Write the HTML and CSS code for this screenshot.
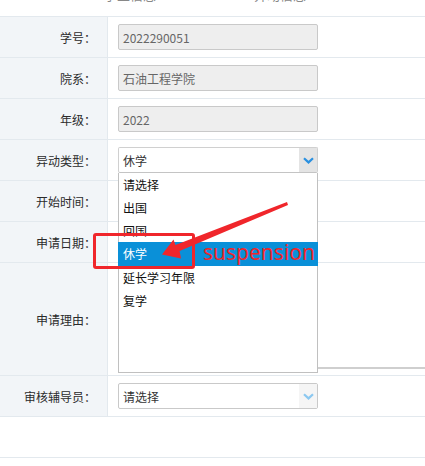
FILE: index.html
```html
<!DOCTYPE html>
<html lang="zh-CN">
<head>
<meta charset="utf-8">
<title>学籍异动申请</title>
<link rel="stylesheet" href="styles.css">
</head>
<body>
<div class="page">
  <div class="head"><span class="tab tab-a">学生信息</span><span class="tab tab-b">异动信息</span></div>
  <div class="form">
    <div class="row"><div class="lbl">学号：</div><div class="val"><div class="field ro">2022290051</div></div></div>
    <div class="row"><div class="lbl">院系：</div><div class="val"><div class="field ro">石油工程学院</div></div></div>
    <div class="row"><div class="lbl">年级：</div><div class="val"><div class="field ro">2022</div></div></div>
    <div class="row top"><div class="lbl">异动类型：</div><div class="val">
      <div class="field select focus"><span class="sel-text">休学</span><span class="arrow"><svg width="11" height="7" viewBox="0 0 11 7"><path d="M1 1.2 L5.5 5.4 L10 1.2" fill="none" stroke="#2a90e0" stroke-width="2.2"/></svg></span>
        <ul class="list">
          <li>请选择</li>
          <li>出国</li>
          <li>回国</li>
          <li class="hl">休学</li>
          <li>延长学习年限</li>
          <li>复学</li>
        </ul>
      </div>
    </div></div>
    <div class="row"><div class="lbl">开始时间：</div><div class="val"></div></div>
    <div class="row"><div class="lbl">申请日期：</div><div class="val"></div></div>
    <div class="row tall"><div class="lbl">申请理由：</div><div class="val reason"><div class="textarea"></div><div class="filler"></div></div></div>
    <div class="row"><div class="lbl">审核辅导员：</div><div class="val"><div class="field select"><span class="sel-text">请选择</span><span class="arrow light"><svg width="11" height="7" viewBox="0 0 11 7"><path d="M1 1.2 L5.5 5.4 L10 1.2" fill="none" stroke="#8cc8f0" stroke-width="2.2"/></svg></span></div></div></div>
    <div class="row blank"></div>
  </div>

  <div class="mark-rect"></div>
  <span class="mark-text">suspension</span>
  <svg class="mark-arrow" width="425" height="466" viewBox="0 0 425 466">
    <polygon points="287,202 288,205 179.6,251.1 181,258.5 162,254.5 173.5,239.5 175.4,244.9" fill="#f0262b"/>
  </svg>
</div>
</body>
</html>
```

FILE: styles.css
```css
html, body {
  margin: 0;
  padding: 0;
  background: #fff;
}
body {
  font-family: "Noto Sans CJK SC", "Noto Sans", sans-serif;
  font-size: 12px;
  color: #333;
  overflow: hidden;
}
.page {
  position: relative;
  width: 425px;
  height: 466px;
  overflow: hidden;
}
.head {
  height: 16px;
  border-bottom: 1px solid #e3e9ee;
  display: flex;
  overflow: hidden;
}
.tab {
  display: block;
  font-size: 13px;
  line-height: 13px;
  margin-top: -12px;
  color: #888;
}
.tab-a { margin-left: 104px; }
.tab-b { margin-left: 98px; }

.form {
  display: flex;
  flex-direction: column;
}
.row {
  display: flex;
  height: 40px;
  border-bottom: 1px solid #e3e9ee;
}
.row.tall { height: 112px; }
.row.blank { height: 40px; }
.row.top { position: relative; z-index: 2; }
.lbl {
  width: 96px;
  padding-right: 11px;
  background: #f2f5f8;
  border-right: 1px solid #e3e9ee;
  display: flex;
  align-items: center;
  justify-content: flex-end;
  color: #2b2b2b;
  white-space: nowrap;
}
.val {
  flex: 1;
  display: flex;
  align-items: center;
  padding-left: 10px;
}
.field {
  box-sizing: border-box;
  width: 200px;
  height: 26px;
  border: 1px solid #c9c9c9;
  border-radius: 2px;
  display: flex;
  align-items: center;
  padding-left: 4px;
  color: #333;
}
.field.ro {
  background: #eeeeee;
  color: #666;
}
.field.select {
  position: relative;
  padding-left: 0;
  background: #fff;
}
.sel-text {
  flex: 1;
  padding-left: 4px;
}
.arrow {
  width: 18px;
  height: 24px;
  background: #e4e4e4;
  display: flex;
  align-items: center;
  justify-content: center;
}
.arrow.light { background: #f5f5f5; }
.field.focus { border-color: #d0d0d0; border-bottom-color: #c4c4c4; }

.list {
  position: absolute;
  left: -1px;
  top: 25px;
  width: 200px;
  height: 200px;
  box-sizing: border-box;
  margin: 0;
  padding: 0;
  list-style: none;
  background: #fff;
  border: 1px solid #c0c0c0;
  border-top: none;
}
.list li {
  height: 23px;
  line-height: 23px;
  padding-left: 4px;
  color: #111;
}
.list li.hl {
  background: #0a90d8;
  color: #fff;
  margin-left: -1px;
  margin-right: -1px;
  padding-left: 5px;
  height: 24px;
}

.reason {
  align-items: flex-end;
  padding-bottom: 2px;
}
.textarea {
  box-sizing: border-box;
  width: 200px;
  height: 103px;
  border: 1px solid #c9c9c9;
  background: #fff;
}
.filler {
  flex: 1;
  height: 0;
  border-bottom: 2px solid #cfcfcf;
  margin-bottom: 4px;
}

.mark-rect {
  position: absolute;
  left: 93px;
  top: 233px;
  width: 96px;
  height: 30px;
  border: 3px solid #f0262b;
  border-radius: 3px;
  z-index: 5;
}
.mark-text {
  position: absolute;
  left: 203px;
  top: 242px;
  font-family: "Noto Sans", sans-serif;
  font-size: 21px;
  line-height: 21px;
  color: #f0262b;
  z-index: 5;
}
.mark-arrow {
  position: absolute;
  left: 0;
  top: 0;
  z-index: 6;
  pointer-events: none;
}
```
